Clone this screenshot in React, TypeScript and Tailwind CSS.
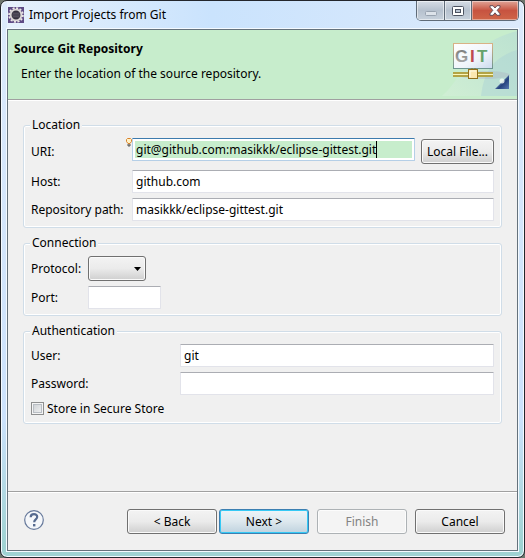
import type { ReactNode } from "react";

const fieldClass =
  "block h-[23px] min-w-0 rounded-[1px] border border-[#e2e3ea] border-t-[#abadb3] bg-white px-[3px] text-black outline-none";

const buttonClass =
  "h-[25px] shrink-0 rounded-[3px] border border-[#707070] bg-linear-to-b from-[#f3f3f3] from-0% via-[#ebebeb] via-50% to-[#cfcfcf] to-100% text-center text-black shadow-[inset_0_0_0_1px_#fafafa]";

function Group({ title, children }: { title: string; children: ReactNode }) {
  return (
    <fieldset className="rounded-[3px] border border-[#d0dde8] pb-[6px] pl-[7px] pr-[7px] shadow-[inset_0_0_0_1px_#fff]">
      <legend className="-ml-px h-4 bg-[#f0f0f0] px-[2px] leading-4">{title}</legend>
      <div className="flex flex-col gap-[5px] pt-[5px]">{children}</div>
    </fieldset>
  );
}

function EclipseIcon() {
  return (
    <svg viewBox="0 0 16 16" className="size-4 shrink-0" aria-hidden="true">
      <rect width="16" height="16" fill="#5f4c86" />
      <circle cx="8" cy="8" r="6.9" fill="none" stroke="#ece8e6" strokeWidth="1.8" strokeDasharray="2.1 1.5" />
      <circle cx="8" cy="8" r="5.4" fill="#35313f" stroke="#dcd8d8" strokeWidth="1.9" />
      <path d="M4.600 6.200h6.800M4.200 8h7.600M4.600 9.800h6.800" stroke="#6b6675" strokeWidth=".8" />
    </svg>
  );
}

function GitBanner() {
  return (
    <svg viewBox="0 0 75 69" className="h-[69px] w-[75px] shrink-0" role="img" aria-label="GIT">
      <defs>
        <linearGradient id="swoop" x1="0" y1="1" x2="1" y2="0">
          <stop offset="0" stopColor="#d2efd6" />
          <stop offset="1" stopColor="#b9dfd2" />
        </linearGradient>
        <linearGradient id="board" x1="0" y1="0" x2="1" y2="1">
          <stop offset="0" stopColor="#ffffff" />
          <stop offset=".6" stopColor="#f0f4fa" />
          <stop offset="1" stopColor="#cbdaee" />
        </linearGradient>
        <linearGradient id="frame" x1="0" y1="0" x2="0" y2="1">
          <stop offset="0" stopColor="#d9b285" />
          <stop offset="1" stopColor="#6e9590" />
        </linearGradient>
        <linearGradient id="corner" x1="0" y1="0" x2="1" y2="1">
          <stop offset=".25" stopColor="#a9c6e6" />
          <stop offset=".6" stopColor="#25427e" />
          <stop offset="1" stopColor="#5778b2" />
        </linearGradient>
        <linearGradient id="gray" x1="0" y1="0" x2="0" y2="1">
          <stop offset="0" stopColor="#777" />
          <stop offset="1" stopColor="#b0b0b0" />
        </linearGradient>
      </defs>
      <path d="M0 66C22 48 23 15 75 1v65z" fill="url(#swoop)" opacity=".8" />
      <path d="M39 66C42 41 52 27 75 20v46z" fill="#afd5d5" opacity=".55" />
      <ellipse cx="42" cy="45" rx="26" ry="4" fill="#a99bb2" opacity=".25" />
      <rect x="11.5" y="13.500" width="39" height="25" fill="url(#board)" stroke="url(#frame)" />
      <g fontFamily="Liberation Sans, sans-serif" fontWeight="700" fontSize="17">
        <text x="13" y="32" fill="url(#gray)">G</text>
        <text x="28" y="32" fill="#bd4b50">I</text>
        <text x="35" y="32" fill="#66a36c">T</text>
      </g>
      <path d="M30 38v3m3-3v3" stroke="#8c7622" />
      <rect x="11" y="42" width="40" height="5" fill="#b3a445" />
      <path d="M11 44.500h40" stroke="#fbf6ba" />
      <rect x="26.500" y="39.500" width="9" height="9" fill="#fbe7b0" stroke="#92701c" />
      <path d="M28 47V41h6" fill="none" stroke="#fffbe9" />
      <path d="M67 45v14H53z" fill="url(#corner)" />
      <circle cx="60" cy="51" r="2.500" fill="#f2fbf4" opacity=".8" />
    </svg>
  );
}

function WindowControls() {
  const glass =
    "grid h-[19px] place-items-center border-r border-[#5f6b78] bg-linear-to-b from-[#d6dde5] from-0% via-[#b6c1ce] via-50% to-[#c7d1dc] to-100% shadow-[inset_0_0_0_1px_#ffffff88]";
  return (
    <div className="flex shrink-0 self-start overflow-hidden rounded-b-[5px] border border-t-0 border-[#5f6b78]">
      <button aria-label="Minimize" disabled className={`${glass} w-[28px]`}>
        <svg viewBox="0 0 14 6" className="mt-1 h-[6px] w-[14px]">
          <rect x="1.500" y="1.500" width="11" height="4" rx="1" fill="#dde3ea" stroke="#98a3b0" />
        </svg>
      </button>
      <button aria-label="Maximize" className={`${glass} w-[27px]`}>
        <svg viewBox="0 0 12 10" className="h-[10px] w-[12px]">
          <rect x=".5" y=".5" width="11" height="9" rx="1" fill="#fff" stroke="#4c5361" />
          <rect x="3.500" y="3.500" width="5" height="3" fill="#b9c4d2" stroke="#4c5361" />
        </svg>
      </button>
      <button
        aria-label="Close"
        className="grid h-[19px] w-[46px] place-items-center bg-linear-to-b from-[#dfa497] from-0% via-[#c75340] via-50% to-[#cf6548] to-100% shadow-[inset_0_0_0_1px_#ffffff66]"
      >
        <svg viewBox="0 0 12 11" className="h-[11px] w-[12px]">
          <path d="M1 .7h3L6 3 8 .7h3v1.500L8.200 5.300 11 8.800v1.500H8L6 7.800 4 10.300H1V8.800l2.800-3.500L1 2.200z" fill="#fff" stroke="#5a4450" strokeWidth=".9" />
        </svg>
      </button>
    </div>
  );
}

export default function App() {
  return (
    <div className="min-h-screen bg-[#6d756d] font-['Noto_Sans','Open_Sans',sans-serif] text-xs leading-4 text-black">
      <div className="flex min-h-screen flex-col rounded-[7px] border border-[#23262c] bg-linear-to-b from-[#dceafb] from-0% via-[#cce2fc] via-75% to-[#9fd2d2] to-98% px-[6px] pb-[6px] shadow-[inset_0_0_0_1px_#f4faff]">
        <header className="-mr-px flex h-[28px] items-center bg-linear-to-r from-[#e6f1fc] from-0% via-[#cae3fd] via-40% to-[#dceafb] to-100% pl-px">
          <EclipseIcon />
          <h1 className="ml-[5px] flex-1 whitespace-nowrap">Import Projects from Git</h1>
          <WindowControls />
        </header>

        <div className="flex flex-1 flex-col border border-[#65727c] bg-[#f0f0f0] shadow-[0_0_0_1px_#f4faff]">
          <div className="flex h-[70px] justify-between border-b border-[#a0a0a0] bg-[#c7edcc] shadow-[0_1px_0_#fff]">
            <div className="min-w-0 pl-[6px] pt-[11px]">
              <h2 className="font-bold">Source Git Repository</h2>
              <p className="mt-[9px] pl-[7px]">Enter the location of the source repository.</p>
            </div>
            <GitBanner />
          </div>

          <main className="flex flex-1 flex-col gap-[7px] px-[15px] pt-[17px]">
            <Group title="Location">
              <div className="flex h-[27px] items-center">
                <label htmlFor="uri" className="w-[101px] shrink-0">URI:</label>
                <div className="relative h-[23px] min-w-0 flex-1 self-start rounded-[1px] border border-[#b5cfe7] border-t-[#3d7bad] bg-white p-[2px]">
                  <div className="flex h-[17px] items-center bg-[#c7edcc]">
                    <input
                      id="uri"
                      defaultValue="git@github.com:masikkk/eclipse-gittest.git"
                      className="field-sizing-content h-[17px] min-w-0 pl-px outline-none"
                    />
                    <span className="h-[17px] w-px bg-black" />
                  </div>
                  <svg viewBox="0 0 7 9" className="absolute -left-[7px] -top-px h-[9px] w-[7px]" aria-hidden="true">
                    <path d="M.5 1.500 1.500.5h3l1 1v2L4 5.500H2L.5 3.500z" fill="#fff2c5" stroke="#d9812a" />
                    <path d="M2 6v2h2V6" fill="#aaa" stroke="#615e58" />
                  </svg>
                </div>
                <button className={`${buttonClass} ml-[6px] w-[73px]`}>Local File...</button>
              </div>
              <div className="flex items-center">
                <label htmlFor="host" className="w-[101px] shrink-0">Host:</label>
                <input id="host" defaultValue="github.com" className={`${fieldClass} flex-1`} />
              </div>
              <div className="flex items-center">
                <label htmlFor="path" className="w-[101px] shrink-0">Repository path:</label>
                <input id="path" defaultValue="masikkk/eclipse-gittest.git" className={`${fieldClass} flex-1`} />
              </div>
            </Group>

            <Group title="Connection">
              <div className="flex items-center">
                <label htmlFor="protocol" className="w-[57px] shrink-0">Protocol:</label>
                <div className="grid items-center">
                  <select id="protocol" className={`${buttonClass} col-start-1 row-start-1 w-[58px] appearance-none`}>
                    <option value="" />
                  </select>
                  <svg viewBox="0 0 7 4" className="pointer-events-none col-start-1 row-start-1 mr-[5px] h-[4px] w-[7px] justify-self-end" aria-hidden="true">
                    <path d="M0 0h7L3.500 4z" />
                  </svg>
                </div>
              </div>
              <div className="flex items-center">
                <label htmlFor="port" className="w-[57px] shrink-0">Port:</label>
                <input id="port" className={`${fieldClass} w-[73px]`} />
              </div>
            </Group>

            <Group title="Authentication">
              <div className="flex items-center">
                <label htmlFor="user" className="w-[149px] shrink-0">User:</label>
                <input id="user" defaultValue="git" className={`${fieldClass} flex-1`} />
              </div>
              <div className="flex items-center">
                <label htmlFor="password" className="w-[149px] shrink-0">Password:</label>
                <input id="password" type="password" className={`${fieldClass} flex-1`} />
              </div>
              <div className="flex h-[17px] items-center gap-[3px]">
                <input
                  id="store"
                  type="checkbox"
                  className="size-[13px] appearance-none border border-[#8e8f8f] bg-linear-to-br from-[#c8ccd0] to-[#f6f6f6] shadow-[inset_0_0_0_1px_#f4f4f4,inset_0_0_0_2px_#b9bec4]"
                />
                <label htmlFor="store">Store in Secure Store</label>
              </div>
            </Group>
          </main>

          <footer className="mt-4 flex items-center border-t border-[#a0a0a0] pb-4 pl-4 pr-[12px] pt-[17px] shadow-[inset_0_1px_0_#fff]">
            <button aria-label="Help" className="mr-auto">
              <svg viewBox="0 0 20 20" className="-mt-[3px] size-5">
                <circle cx="10" cy="10" r="9.300" fill="#f5f7fa" stroke="#66799b" strokeWidth="1.200" />
                <path d="M6.700 7.200C6.700 3.200 13.400 3.300 13.200 7c-.1 2.400-3 2.500-3 5.200" fill="none" stroke="#566a8f" strokeWidth="2.200" />
                <rect x="9" y="14" width="2.400" height="2.400" fill="#566a8f" />
              </svg>
            </button>
            <button className={`${buttonClass} w-[90px]`}>&lt; Back</button>
            <button className="ml-[2px] h-[25px] w-[90px] rounded-[3px] border border-[#3c7fb1] bg-linear-to-b from-[#edf4f8] from-0% via-[#dde8ee] via-50% to-[#bfd2de] to-100% shadow-[inset_0_0_0_1px_#35c9f5]">
              Next &gt;
            </button>
            <button disabled className="ml-2 h-[25px] w-[90px] rounded-[3px] border border-[#adb2b5] bg-[#f4f4f4] text-[#838383] shadow-[inset_0_0_0_1px_#fcfcfc]">
              Finish
            </button>
            <button className={`${buttonClass} ml-2 w-[90px]`}>Cancel</button>
          </footer>
        </div>
      </div>
    </div>
  );
}
